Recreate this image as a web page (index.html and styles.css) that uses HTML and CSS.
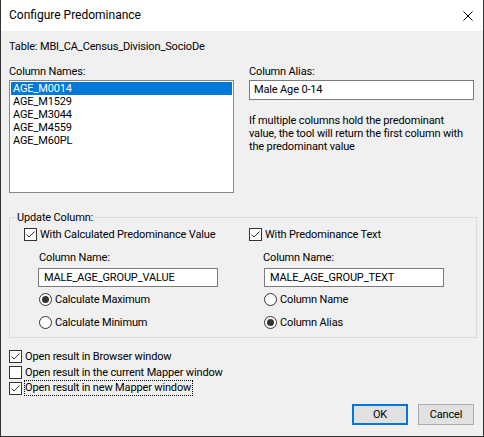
FILE: index.html
```html
<!DOCTYPE html>
<html>
<head>
<meta charset="utf-8">
<link rel="stylesheet" href="styles.css">
</head>
<body>
<div class="window">
  <div class="titlebar">
    <span class="title">Configure Predominance</span>
    <svg class="close" width="10" height="10" viewBox="0 0 10 10"><path d="M0.5 0.5L9.5 9.5M9.5 0.5L0.5 9.5" stroke="#000" stroke-width="1" fill="none"/></svg>
  </div>
  <div class="content">
    <div class="table-line">Table: MBI_CA_Census_Division_SocioDe</div>
    <div class="top-grid">
      <div class="col">
        <div class="label">Column Names:</div>
        <div class="listbox">
          <div class="item selected">AGE_M0014</div>
          <div class="item">AGE_M1529</div>
          <div class="item">AGE_M3044</div>
          <div class="item">AGE_M4559</div>
          <div class="item">AGE_M60PL</div>
        </div>
      </div>
      <div class="col">
        <div class="label">Column Alias:</div>
        <div class="textbox alias">Male Age 0-14</div>
        <p class="info">If multiple columns hold the predominant<br>value, the tool will return the first column with<br>the predominant value</p>
      </div>
    </div>
    <fieldset class="group">
      <legend>Update Column:</legend>
      <div class="group-grid">
        <div class="gcol">
          <div class="check"><span class="box"><svg width="11" height="11" viewBox="0 0 11 11"><path d="M1.5 5.5L4 8L9.5 2.5" stroke="#333" stroke-width="1" fill="none"/></svg></span><span>With Calculated Predominance Value</span></div>
          <div class="sub">
            <div class="sublabel">Column Name:</div>
            <div class="textbox field">MALE_AGE_GROUP_VALUE</div>
            <div class="radio first"><span class="circle on"></span><span>Calculate Maximum</span></div>
            <div class="radio"><span class="circle"></span><span>Calculate Minimum</span></div>
          </div>
        </div>
        <div class="gcol">
          <div class="check"><span class="box"><svg width="11" height="11" viewBox="0 0 11 11"><path d="M1.5 5.5L4 8L9.5 2.5" stroke="#333" stroke-width="1" fill="none"/></svg></span><span>With Predominance Text</span></div>
          <div class="sub right">
            <div class="sublabel">Column Name:</div>
            <div class="textbox field">MALE_AGE_GROUP_TEXT</div>
            <div class="radio first"><span class="circle"></span><span>Column Name</span></div>
            <div class="radio"><span class="circle on"></span><span>Column Alias</span></div>
          </div>
        </div>
      </div>
    </fieldset>
    <div class="options">
      <div class="check"><span class="box"><svg width="11" height="11" viewBox="0 0 11 11"><path d="M1.5 5.5L4 8L9.5 2.5" stroke="#333" stroke-width="1" fill="none"/></svg></span><span>Open result in Browser window</span></div>
      <div class="check"><span class="box"></span><span>Open result in the current Mapper window</span></div>
      <div class="check"><span class="box"><svg width="11" height="11" viewBox="0 0 11 11"><path d="M1.5 5.5L4 8L9.5 2.5" stroke="#333" stroke-width="1" fill="none"/></svg></span><span class="focus">Open result in new Mapper window</span></div>
    </div>
    <div class="buttons">
      <div class="btn default">OK</div>
      <div class="btn">Cancel</div>
    </div>
  </div>
</div>
</body>
</html>
```

FILE: styles.css
```css
html, body {
  margin: 0;
  padding: 0;
  background: #f0f0f0;
}
body {
  font-family: Roboto, "Liberation Sans", Arial, sans-serif;
  font-size: 11px;
  letter-spacing: -0.15px;
  color: #000;
}
.window {
  box-sizing: border-box;
  width: 484px;
  height: 437px;
  background: #f0f0f0;
  border: 1px solid #333;
  border-top: none;
  overflow: hidden;
}
.titlebar {
  height: 31px;
  background: #fff;
  display: flex;
  align-items: center;
  justify-content: space-between;
  padding: 0 10px 0 8px;
}
.title {
  font-size: 12px;
  letter-spacing: 0;
  line-height: 15px;
}
.close {
  display: block;
}
.content {
  padding: 0 9px 0 8px;
}
.table-line {
  margin-top: 8px;
  line-height: 15px;
}
.top-grid {
  margin-top: 10px;
  display: grid;
  grid-template-columns: 225px 225px;
  column-gap: 15px;
}
.label {
  line-height: 15px;
  margin-bottom: 1px;
}
.listbox {
  box-sizing: border-box;
  height: 113px;
  background: #fff;
  border: 1px solid #828790;
  padding: 1px;
}
.item {
  line-height: 13px;
  height: 13px;
  padding-left: 2px;
  white-space: nowrap;
}
.item.selected {
  background: #0078d7;
  color: #fff;
}
.textbox {
  box-sizing: border-box;
  background: #fff;
  border: 1px solid #7a7a7a;
  white-space: nowrap;
}
.alias {
  height: 20px;
  line-height: 18px;
  padding: 0 4px;
}
.info {
  margin: 14px 0 0 0;
  line-height: 13px;
  white-space: nowrap;
}
.group {
  margin: 17px -3px 0 0;
  padding: 1px 0 7px 0;
  border: 1px solid #dcdcdc;
  min-width: 0;
}
.group legend {
  margin-left: 6px;
  padding: 0 1px;
  line-height: 15px;
}
.group-grid {
  display: grid;
  grid-template-columns: 225px 1fr;
  padding-left: 14px;
}
.check {
  display: flex;
  align-items: center;
  height: 16px;
  gap: 3px;
  white-space: nowrap;
}
.box {
  box-sizing: border-box;
  width: 13px;
  height: 13px;
  border: 1px solid #333;
  background: #fff;
  flex: none;
}
.box svg {
  display: block;
}
.sub {
  padding-left: 14px;
}
.sub.right {
  padding-left: 15px;
}
.sublabel {
  margin-top: 8px;
  line-height: 15px;
  padding-left: 1px;
}
.sub.right .sublabel {
  padding-left: 0;
  margin-left: -1px;
}
.field {
  margin-top: 3px;
  width: 180px;
  height: 19px;
  line-height: 17px;
  padding: 0 5px;
}
.radio {
  display: flex;
  align-items: center;
  gap: 3px;
  height: 16px;
  margin-top: 7px;
  padding-left: 1px;
  white-space: nowrap;
}
.sub.right .radio {
  padding-left: 0;
}
.radio.first {
  margin-top: 4px;
}
.circle {
  box-sizing: border-box;
  width: 13px;
  height: 13px;
  border: 1px solid #333;
  border-radius: 50%;
  background: #fff;
  flex: none;
  display: flex;
  align-items: center;
  justify-content: center;
}
.circle.on::after {
  content: "";
  width: 7px;
  height: 7px;
  border-radius: 50%;
  background: #333;
}
.options {
  margin-top: 10px;
}
.focus {
  border: 1px dotted #000;
  margin-left: -1px;
  padding: 0 1px 0 0;
  line-height: 14px;
}
.buttons {
  margin-top: 8px;
  display: flex;
  justify-content: flex-end;
  gap: 10px;
}
.btn {
  box-sizing: border-box;
  width: 56px;
  height: 21px;
  background: #e1e1e1;
  border: 1px solid #adadad;
  display: flex;
  align-items: center;
  justify-content: center;
}
.btn.default {
  border: 2px solid #0078d7;
}
```
